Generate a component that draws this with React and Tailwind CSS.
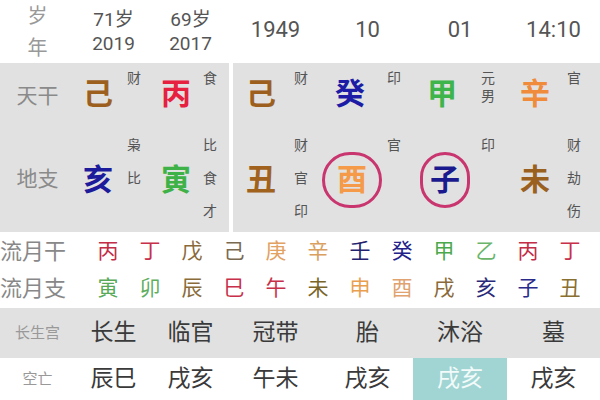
import React from "react";

// column widths shared by every row (after the 75px label column)
const colW = ["w-[77px]", "w-[77px]", "w-[93px]", "w-[91px]", "w-[94px]", "w-[93px]"];

const header = [
  { top: "71岁", bottom: "2019" },
  { top: "69岁", bottom: "2017" },
  { single: "1949" },
  { single: "10" },
  { single: "01" },
  { single: "14:10" },
];

const pillarsLeft = [
  {
    w: "w-[77px]",
    box: "w-[46px]",
    ml: "ml-[6px]",
    stem: { ch: "己", color: "text-[#9c5f1e]", labels: ["财"] },
    branch: { ch: "亥", color: "text-[#1b1b9c]", labels: ["枭", "比", ""] },
  },
  {
    w: "w-[77px]",
    box: "w-[48px]",
    ml: "ml-[3px]",
    stem: { ch: "丙", color: "text-[#e6203e]", labels: ["食"] },
    branch: { ch: "寅", color: "text-[#3eb247]", labels: ["比", "食", "才"] },
  },
];

const pillarsRight = [
  {
    w: "w-[89px]",
    box: "w-[56px]",
    ml: "ml-[5px]",
    stem: { ch: "己", color: "text-[#9c5f1e]", labels: ["财"] },
    branch: { ch: "丑", color: "text-[#a0621d]", labels: ["财", "官", "印"] },
  },
  {
    w: "w-[91px]",
    box: "w-[56px]",
    ml: "ml-[9px]",
    stem: { ch: "癸", color: "text-[#1c1ca6]", labels: ["印"] },
    branch: { ch: "酉", color: "text-[#f49a48]", labels: ["官", "", ""], circle: "w-[60px] h-[56px] ml-[4px]" },
  },
  {
    w: "w-[94px]",
    box: "w-[58px]",
    ml: "ml-[10px]",
    stem: { ch: "甲", color: "text-[#3db54a]", labels: ["元", "男"] },
    branch: { ch: "子", color: "text-[#1a1a8e]", labels: ["印", "", ""], circle: "w-[50px] h-[56px] ml-[6px]" },
  },
  {
    w: "w-[93px]",
    box: "w-[56px]",
    ml: "ml-[4px]",
    stem: { ch: "辛", color: "text-[#f08b3c]", labels: ["官"] },
    branch: { ch: "未", color: "text-[#9a6020]", labels: ["财", "劫", "伤"] },
  },
];

const monthStems = [
  ["丙", "text-[#c22d47]"],
  ["丁", "text-[#c8304a]"],
  ["戊", "text-[#8a6a3a]"],
  ["己", "text-[#7a6a52]"],
  ["庚", "text-[#e2a262]"],
  ["辛", "text-[#d9a060]"],
  ["壬", "text-[#22226e]"],
  ["癸", "text-[#22228a]"],
  ["甲", "text-[#4ca84c]"],
  ["乙", "text-[#6ab56a]"],
  ["丙", "text-[#c22d47]"],
  ["丁", "text-[#c8304a]"],
];

const monthBranches = [
  ["寅", "text-[#58aa58]"],
  ["卯", "text-[#5fae5f]"],
  ["辰", "text-[#8a6c3a]"],
  ["巳", "text-[#c8304a]"],
  ["午", "text-[#c8304a]"],
  ["未", "text-[#7a6428]"],
  ["申", "text-[#e8a050]"],
  ["酉", "text-[#e0a26e]"],
  ["戌", "text-[#8a6a3a]"],
  ["亥", "text-[#2a2a7a]"],
  ["子", "text-[#2a2a8a]"],
  ["丑", "text-[#8a7030]"],
];

const changsheng = ["长生", "临官", "冠带", "胎", "沐浴", "墓"];
const kongwang = ["辰巳", "戌亥", "午未", "戌亥", "戌亥", "戌亥"];

const Pillar = ({ p }) => (
  <div className={`${p.w} flex flex-col`}>
    {/* 天干 */}
    <div className="flex h-[62px]">
      <div className={`${p.box} flex items-center justify-center`}>
        <span className={`text-[30px] font-bold leading-none ${p.stem.color}`}>{p.stem.ch}</span>
      </div>
      <div className={`${p.ml} w-[16px] pt-[6px] flex flex-col text-[14px] leading-[18px] text-[#555]`}>
        {p.stem.labels.map((l, i) => (
          <span key={i}>{l}</span>
        ))}
      </div>
    </div>
    {/* 地支 */}
    <div className="flex h-[107px]">
      <div className={`${p.box} flex items-center justify-center pt-[2px]`}>
        {p.branch.circle ? (
          <span
            className={`${p.branch.circle} shrink-0 flex items-center justify-center rounded-full border-[3px] border-[#c9356f]`}
          >
            <span className={`text-[30px] font-bold leading-none ${p.branch.color}`}>{p.branch.ch}</span>
          </span>
        ) : (
          <span className={`text-[30px] font-bold leading-none ${p.branch.color}`}>{p.branch.ch}</span>
        )}
      </div>
      <div className={`${p.ml} w-[16px] flex flex-col justify-center text-[14px] text-[#555]`}>
        {p.branch.labels.map((l, i) => (
          <span key={i} className="h-[33px] leading-[33px]">
            {l}
          </span>
        ))}
      </div>
    </div>
  </div>
);

const App = () => {
  return (
    <div className="w-[600px] h-[400px] overflow-hidden bg-white font-[Roboto,'Noto_Sans_CJK_SC',sans-serif]">
      {/* 岁 / 年 */}
      <div className="flex h-[63px]">
        <div className="w-[75px] flex flex-col items-center justify-center text-[20px] leading-[32px] text-[#999]">
          <span>岁</span>
          <span>年</span>
        </div>
        {header.map((h, i) => (
          <div key={i} className={`${colW[i]} flex flex-col items-center justify-center text-[#555]`}>
            {h.single ? (
              <span className="text-[22px] pb-[4px]">{h.single}</span>
            ) : (
              <>
                <span className="text-[19px] leading-[24px]">{h.top}</span>
                <span className="text-[19px] leading-[24px]">{h.bottom}</span>
              </>
            )}
          </div>
        ))}
      </div>

      {/* 天干 / 地支 panels */}
      <div className="flex h-[169px]">
        <div className="w-[229px] flex bg-[#e1e1e1]">
          <div className="w-[75px] flex flex-col items-center text-[21px] text-[#8a8a8a]">
            <div className="h-[62px] flex items-center pt-[6px]">天干</div>
            <div className="h-[107px] flex items-center pt-[3px]">地支</div>
          </div>
          {pillarsLeft.map((p, i) => (
            <Pillar key={i} p={p} />
          ))}
        </div>
        <div className="w-[4px] bg-white" />
        <div className="flex-1 flex bg-[#e1e1e1]">
          {pillarsRight.map((p, i) => (
            <Pillar key={i} p={p} />
          ))}
        </div>
      </div>

      {/* 流月 */}
      <div className="flex flex-col pt-[1px]">
        <div className="flex h-[37px] items-center">
          <div className="w-[87px] text-[22px] text-[#888] leading-none">流月干</div>
          {monthStems.map(([c, col], i) => (
            <div key={i} className={`w-[42px] text-center text-[21px] leading-none ${col}`}>
              {c}
            </div>
          ))}
        </div>
        <div className="flex h-[37px] items-center">
          <div className="w-[87px] text-[22px] text-[#888] leading-none">流月支</div>
          {monthBranches.map(([c, col], i) => (
            <div key={i} className={`w-[42px] text-center text-[21px] leading-none ${col}`}>
              {c}
            </div>
          ))}
        </div>
      </div>

      {/* 长生宫 */}
      <div className="flex h-[50px] mt-[1px] bg-[#e1e1e1] items-center">
        <div className="w-[75px] text-center text-[15px] text-[#999]">长生宫</div>
        {changsheng.map((v, i) => (
          <div key={i} className={`${colW[i]} text-center text-[23px] text-[#3a3a3a]`}>
            {v}
          </div>
        ))}
      </div>

      {/* 空亡 */}
      <div className="flex h-[42px]">
        <div className="w-[75px] flex items-center justify-center text-[15px] text-[#999]">空亡</div>
        {kongwang.map((v, i) => (
          <div
            key={i}
            className={`${colW[i]} flex items-center justify-center text-[23px] ${
              i === 4 ? "bg-[#a0d5d3] text-[#f2fafa]" : "text-[#3a3a3a]"
            }`}
          >
            {v}
          </div>
        ))}
      </div>
    </div>
  );
};

export default App;
